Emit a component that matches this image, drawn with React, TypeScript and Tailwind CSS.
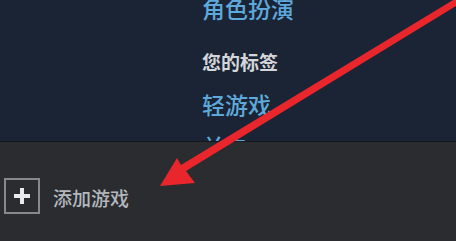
import React from 'react';

const App: React.FC = () => {
  return (
    <div
      className="relative w-[456px] h-[241px] overflow-hidden bg-[#2a2c30]"
      style={{ fontFamily: '"Noto Sans CJK SC", "Noto Sans", sans-serif' }}
    >
      <div className="h-[141px] overflow-hidden bg-[#1b2435] pl-[202px]">
        <div className="-mt-[7px] flex flex-col">
          <span className="text-[23px] leading-[30px] font-medium text-[#5ea9dc]">角色扮演</span>
          <span className="mt-[27px] text-[19px] leading-[24px] font-bold text-[#d3d6da]">您的标签</span>
          <span className="mt-[15px] text-[23px] leading-[30px] font-medium text-[#5ea9dc]">轻游戏</span>
          <span className="mt-[12px] text-[23px] leading-[30px] font-medium text-[#5ea9dc]">关卡</span>
        </div>
      </div>
      <div className="h-[1px] bg-[#15181d]" />
      <div className="flex items-center pl-[4px] pt-[36px]">
        <div className="flex h-[36px] w-[36px] items-center justify-center border-2 border-[#85888d]">
          <svg width="16" height="16" viewBox="0 0 16 16">
            <rect x="6" y="0" width="4" height="16" fill="#e8eaec" />
            <rect x="0" y="6" width="16" height="4" fill="#e8eaec" />
          </svg>
        </div>
        <span className="ml-[13px] mt-[3px] text-[19px] leading-[24px] font-medium text-[#b4b8bd]">添加游戏</span>
      </div>
      <svg className="absolute inset-0" width="456" height="241" viewBox="0 0 456 241">
        <polygon
          points="458,-3 461,3 186,171 195,183 160,186 177,158 181,165"
          fill="#e8262c"
        />
      </svg>
    </div>
  );
};

export default App;
